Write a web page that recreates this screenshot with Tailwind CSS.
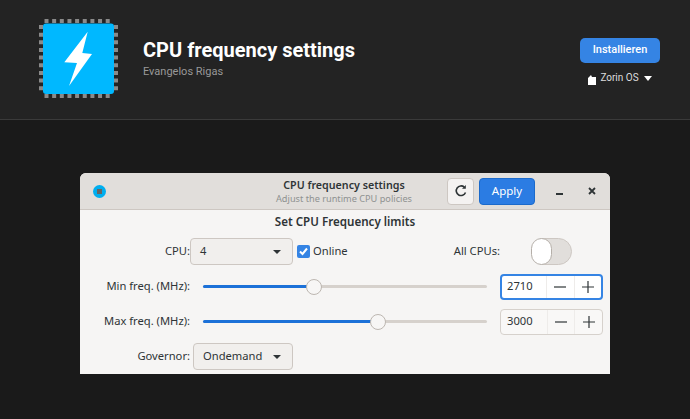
<!DOCTYPE html>
<html>
<head>
<meta charset="utf-8">
<script src="https://cdn.jsdelivr.net/npm/@tailwindcss/browser@4"></script>
</head>
<body class="m-0 h-[419px] w-[690px] overflow-hidden bg-[#1a1a1a] font-['Noto_Sans',sans-serif]">
<header class="flex h-[120px] items-start border-b border-[#3a3a3a] bg-[#232323] font-['Roboto',sans-serif]">
  <svg class="ml-[38px] mt-[18px] h-[81px] w-[81px] shrink-0" viewBox="0 0 81 81">
    <g stroke="#8a8a8a" stroke-width="4" stroke-dasharray="4 3.65">
      <path d="M6.5 3 H75"/>
      <path d="M6.5 78 H75"/>
      <path d="M3 7 V75"/>
      <path d="M78 7 V75"/>
    </g>
    <rect x="5" y="5.5" width="71" height="70.5" rx="3" fill="#00b8ff"/>
    <path d="M49.7 13.7 L26.3 44.3 L39 45 L31 68 L54 36 L44.3 35 Z" fill="#fff"/>
  </svg>
  <div class="ml-[24px] mt-[38px] flex flex-col">
    <div class="text-[20px] leading-[24px] font-bold text-white">CPU frequency settings</div>
    <div class="mt-[3px] text-[11px] leading-[14px] text-[#999999]">Evangelos Rigas</div>
  </div>
  <div class="ml-auto mr-[30px] mt-[38px] flex w-[80px] flex-col items-center">
    <button class="h-[25px] w-[80px] rounded-[5px] bg-[#3584e4] text-[11px] font-medium text-white">Installieren</button>
    <div class="mt-[8px] flex items-center text-[10px] leading-[14px] text-[#dddddd]">
      <svg class="mr-[4px] mt-[3px] h-[10px] w-[8px]" viewBox="0 0 8 10"><path d="M0 3 L3 0 L4 2 L8 2 V10 H0 Z" fill="#fff"/></svg>
      <span>Zorin OS</span>
      <span class="ml-[5px] h-0 w-0 border-x-[4.5px] border-t-[5px] border-x-transparent border-t-white"></span>
    </div>
  </div>
</header>

<main class="ml-[80px] mt-[53px] h-[201px] w-[530px] overflow-hidden rounded-t-[6px] bg-[#f6f5f4] text-[11.2px] text-[#2e3436]">
  <div class="flex h-[37px] items-center border-b border-[#cdc7c2] bg-[#e1dedb]">
    <svg class="ml-[13px] h-[13px] w-[13px]" viewBox="0 0 13 13"><circle cx="6.5" cy="6.5" r="6.5" fill="#00aeef"/><rect x="4" y="4" width="5" height="5" fill="#666"/></svg>
    <div class="ml-[168px] flex w-[140px] flex-col items-center">
      <div class="text-[10.7px] leading-[15px] font-semibold text-[#2e3436]">CPU frequency settings</div>
      <div class="text-[9.2px] leading-[12px] whitespace-nowrap text-[#8f9291]">Adjust the runtime CPU policies</div>
    </div>
    <button class="ml-[33px] flex h-[27px] w-[27px] items-center justify-center rounded-[4px] border border-[#cdc7c2] bg-[#f4f2f1]">
      <svg class="h-[14px] w-[14px]" viewBox="0 0 14 14" fill="none" stroke="#2e3436" stroke-width="1.6"><path d="M11.5 8.5 A4.8 4.8 0 1 1 10.3 3.2"/><path d="M11.8 1 V4.8 H8 Z" fill="#2e3436" stroke="none"/></svg>
    </button>
    <button class="ml-[5px] h-[27px] w-[56px] rounded-[4px] border border-[#1b6acb] bg-[#2b7ce3] text-[11.5px] text-white">Apply</button>
    <svg class="ml-[20px] h-[10px] w-[10px]" viewBox="0 0 10 10"><rect x="1" y="7" width="7" height="2" fill="#2e3436"/></svg>
    <svg class="ml-[22px] h-[10px] w-[10px]" viewBox="0 0 10 10" stroke="#2e3436" stroke-width="1.8"><path d="M2 2 L8 8 M8 2 L2 8"/></svg>
  </div>

  <div class="pt-[4px]">
    <div class="text-center text-[11.6px] leading-[16px] font-semibold text-[#2e3436]">Set CPU Frequency limits</div>

    <div class="mt-[8px] flex h-[27px] items-center">
      <span class="w-[110px] text-right">CPU:</span>
      <div class="flex h-[27px] w-[103px] items-center justify-between rounded-[4px] border border-[#cdc7c2] bg-[#f1efed] pl-[9px] pr-[11px]">
        <span>4</span><span class="h-0 w-0 border-x-[4px] border-t-[4px] border-x-transparent border-t-[#2e3436]"></span>
      </div>
      <span class="ml-[4px] flex h-[13px] w-[13px] items-center justify-center rounded-[2px] bg-[#3584e4]">
        <svg class="h-[11px] w-[11px]" viewBox="0 0 11 11" fill="none" stroke="#fff" stroke-width="2"><path d="M2 5.5 L4.5 8 L9 2.5"/></svg>
      </span>
      <span class="ml-[3px]">Online</span>
      <span class="ml-auto">All CPUs:</span>
      <div class="ml-[31px] mr-[38px] flex h-[27px] w-[41px] items-center rounded-full border border-[#cdc7c2] bg-[#e1dedb]">
        <span class="-ml-px h-[27px] w-[21px] rounded-full border border-[#b5afa9] bg-white"></span>
      </div>
    </div>

    <div class="mt-[8px] flex h-[27px] items-center">
      <span class="w-[110px] text-right">Min freq. (MHz):</span>
      <div class="relative ml-[13px] h-[3px] w-[284px] rounded-full bg-[#d6d1cc]">
        <div class="h-[3px] w-[111px] rounded-full bg-[#1c71d8]"></div>
        <span class="absolute left-[103px] top-[-6.5px] h-[16px] w-[16px] rounded-full border border-[#bdb7b1] bg-[#f7f6f5]"></span>
      </div>
      <div class="ml-[13px] flex h-[26px] w-[103px] items-center rounded-[4px] border-2 border-[#3584e4] bg-white">
        <span class="w-[45px] pl-[5px]">2710</span>
        <span class="flex h-full w-[28px] items-center justify-center border-l border-[#eeecea]">
          <svg class="h-[12px] w-[12px]" viewBox="0 0 12 12" stroke="#2e3436" stroke-width="1.2"><path d="M0 6 H12"/></svg>
        </span>
        <span class="flex h-full w-[28px] items-center justify-center border-l border-[#eeecea]">
          <svg class="h-[12px] w-[12px]" viewBox="0 0 12 12" stroke="#2e3436" stroke-width="1.2"><path d="M0 6 H12 M6 0 V12"/></svg>
        </span>
      </div>
    </div>

    <div class="mt-[8px] flex h-[27px] items-center">
      <span class="w-[110px] text-right">Max freq. (MHz):</span>
      <div class="relative ml-[13px] h-[3px] w-[284px] rounded-full bg-[#d6d1cc]">
        <div class="h-[3px] w-[175px] rounded-full bg-[#1c71d8]"></div>
        <span class="absolute left-[167px] top-[-6.5px] h-[16px] w-[16px] rounded-full border border-[#bdb7b1] bg-[#f7f6f5]"></span>
      </div>
      <div class="ml-[13px] flex h-[26px] w-[103px] items-center rounded-[4px] border border-[#d6d1cc] bg-[#f9f8f7]">
        <span class="w-[46px] pl-[6px]">3000</span>
        <span class="flex h-full w-[28px] items-center justify-center border-l border-[#eeecea]">
          <svg class="h-[12px] w-[12px]" viewBox="0 0 12 12" stroke="#2e3436" stroke-width="1.2"><path d="M0 6 H12"/></svg>
        </span>
        <span class="flex h-full w-[28px] items-center justify-center border-l border-[#eeecea]">
          <svg class="h-[12px] w-[12px]" viewBox="0 0 12 12" stroke="#2e3436" stroke-width="1.2"><path d="M0 6 H12 M6 0 V12"/></svg>
        </span>
      </div>
    </div>

    <div class="mt-[8px] flex h-[27px] items-center">
      <span class="w-[110px] text-right">Governor:</span>
      <div class="ml-[3px] flex h-[27px] w-[100px] items-center justify-between rounded-[4px] border border-[#cdc7c2] bg-[#f1efed] pl-[9px] pr-[11px]">
        <span>Ondemand</span><span class="h-0 w-0 border-x-[4px] border-t-[4px] border-x-transparent border-t-[#2e3436]"></span>
      </div>
    </div>
  </div>
</main>
</body>
</html>
